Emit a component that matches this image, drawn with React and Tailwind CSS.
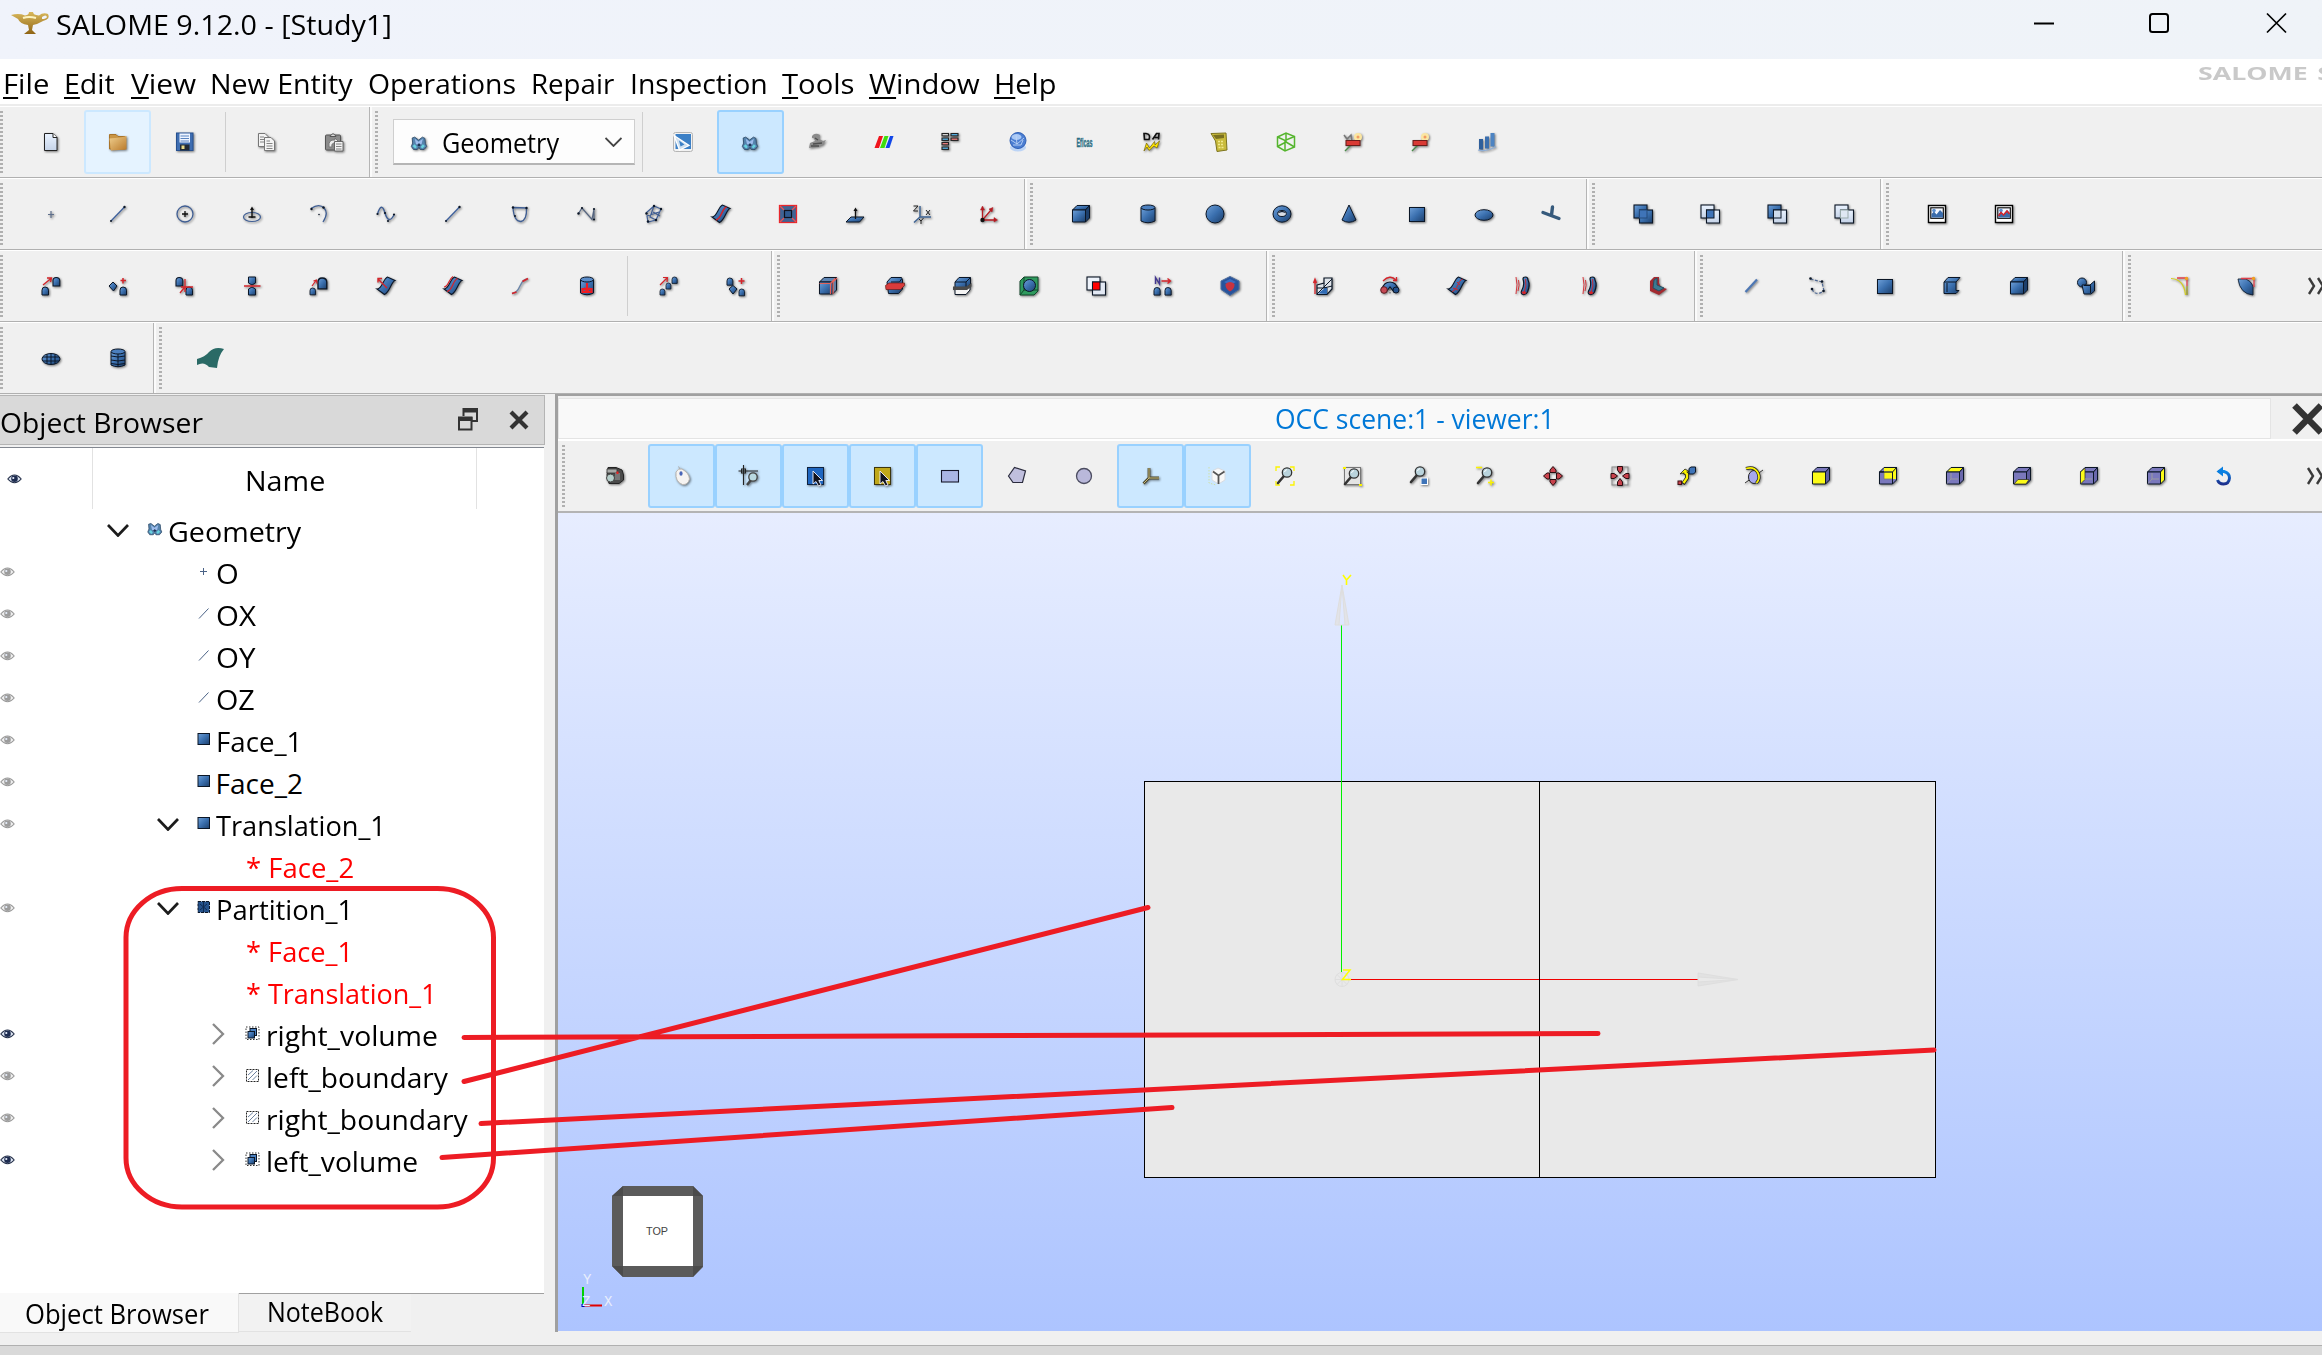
import React, { useLayoutEffect, useRef } from "react";

/* Text squeezed or stretched to a given advance width */
function T({ w, children, className = "" }) {
  const ref = useRef(null);
  useLayoutEffect(() => {
    const el = ref.current;
    el.style.transform = `scaleX(${w / el.offsetWidth})`;
  }, [w]);
  return (
    <span className="inline-block shrink-0 whitespace-nowrap" style={{ width: w }}>
      <span ref={ref} className={"inline-block origin-left whitespace-pre " + className}>{children}</span>
    </span>
  );
}

const B = "url(#blue)";
const K = "#0b1626";
const R = "#d4242a";

function Defs() {
  return (
    <svg className="absolute h-0 w-0" aria-hidden="true">
      <defs>
        <linearGradient id="blue" x1="0" y1="0" x2="1" y2="1">
          <stop offset="0" stopColor="#6fa0d8" /><stop offset="0.5" stopColor="#3a6fae" /><stop offset="1" stopColor="#1d3f6b" />
        </linearGradient>
        <linearGradient id="pale" x1="0" y1="0" x2="0" y2="1">
          <stop offset="0" stopColor="#eaf3ff" /><stop offset="1" stopColor="#c5d3e8" />
        </linearGradient>
        <linearGradient id="gold" x1="0" y1="0" x2="1" y2="1">
          <stop offset="0" stopColor="#f0cf8e" /><stop offset="1" stopColor="#b9792a" />
        </linearGradient>
        <linearGradient id="lamp" x1="0" y1="0" x2="0" y2="1">
          <stop offset="0" stopColor="#d9b85c" /><stop offset="1" stopColor="#8f6414" />
        </linearGradient>
        <linearGradient id="undo" x1="0" y1="0" x2="0" y2="1">
          <stop offset="0" stopColor="#0a86e8" /><stop offset="1" stopColor="#1d2f8c" />
        </linearGradient>
      </defs>
    </svg>
  );
}

const Bell = ({ x, y, s = 1 }) => (
  <path transform={`translate(${x} ${y}) scale(${s})`} d="M0 8V3.2Q0 0 3 0Q6.500 0 6.500 3.200V8Z" fill={B} stroke={K} strokeWidth="1" />
);
const Cube = ({ f = B, t = B, r = "#1d3f6b", children }) => (
  <g strokeLinejoin="round">
    <path d="M1.500 6L6 1.500H18.500L14.500 6Z" fill={t} stroke={K} />
    <path d="M14.500 6L18.500 1.500V14L14.500 18Z" fill={r} stroke={K} />
    <path d="M1.500 6H14.500V18H1.500Z" fill={f} stroke={K} />
    {children}
  </g>
);
const Lens = ({ x = 0, y = 0, children }) => (
  <g>
    {children}
    <g transform={`translate(${x} ${y})`}>
      <path d="M3 17L9 10" stroke="#333" strokeWidth="2.600" strokeLinecap="round" />
      <circle cx="12" cy="6.500" r="4.700" fill="#b9d3dc" stroke="#333" strokeWidth="1.300" />
      <path d="M9.500 6Q10 3.800 12 3.600" stroke="#fff" fill="none" />
    </g>
  </g>
);
const Tri = ({ d }) => <path d={d} fill="#c8424c" stroke="#2a0d10" strokeWidth="1" />;
const Wave = () => <path d="M1 13C6 13.500 7 3 11.500 1L19 4.500C15 6 14 16 8.500 18.500Z" fill={B} stroke={K} strokeWidth="1.100" />;
const Pipe = () => (
  <g>
    <path d="M9 3Q9 1 11.500 1T14 4Q16.500 9 13.500 16Q12 19 9 18.500Q6.500 18 7.500 15Q11 9 9 3Z" fill={B} stroke={K} strokeWidth="1.200" />
    <path d="M11.500 3Q13 10 10 17" stroke={R} fill="none" strokeWidth="0.900" />
    <path d="M7.500 16Q10 14.500 12.500 16.500Q11 19 9 18Z" fill={R} />
    <path d="M2 1Q4 8 2 18M4.500 4Q6 9 4 15" stroke={R} fill="none" strokeWidth="0.900" />
  </g>
);
const Geo = () => (
  <g>
    <path d="M2 3.500L5 2.500L9.500 6L14 2.500L17 4L17.500 10L19 13.500L16 17H11.500L10 14.500L8 17H3.500L1 13.500L2.500 9.500Z" fill="#5583ad" stroke="#22405e" strokeWidth="0.900" />
    <path d="M5 4.500L9.500 8L14.500 4.500L13 11H6.500Z" fill="#9dbcec" />
    <path d="M2.500 13L5 11L7.500 14L5.500 16ZM17 13L14.500 11L12 14L14 16Z" fill="#67d3de" />
    <path d="M8 12L10 9.500L12 12L10 13.500Z" fill="#1c2f4f" />
  </g>
);
const Sheets = ({ a, b, m, ms = K }) => (
  <g>
    <rect x="1" y="1" width="13" height="13" fill={a} stroke={K} strokeWidth="1.100" />
    <rect x="6.500" y="6" width="13" height="13" fill={b} stroke={K} strokeWidth="1.100" />
    <rect x="6.500" y="6" width="7.500" height="8" fill={m} stroke={ms} strokeWidth="1" />
  </g>
);
const Arrow = ({ x, y }) => (
  <path transform={`translate(${x} ${y})`} d="M0 0V13L3 10.500L5.500 15L8 14L5.800 9.500H9.500Z" fill="#10131e" stroke="#f3f3ff" strokeWidth="0.900" />
);
const Dump = ({ c }) => (
  <g>
    <rect x="1.500" y="1.500" width="17" height="17" fill="#fff" stroke="#000" strokeWidth="1.400" />
    <rect x="3.800" y="3.800" width="12.500" height="10.500" fill="#f4f8ff" stroke="#000" strokeWidth="1.100" />
    <path d="M4.500 13.500V10L7 7.500L9.500 10.500L13 6L16 9V13.500Z" fill="#3b6cab" />
    <circle cx="7" cy="6.500" r="1.800" fill="#5b8fd0" />
    {c && <path d="M4.500 12L7 8.500L9.500 11L13 7L15.500 10" stroke={c} strokeWidth="1.500" fill="none" />}
  </g>
);

const ICONS = {
  new: <g><path d="M3.500 1.500H12L16 5.500V18.500H3.500Z" fill="url(#pale)" stroke="#222" /><path d="M12 1.500V5.500H16" fill="#fff" stroke="#222" /></g>,
  open: <g><path d="M1.500 2.500H8L10 4.500H17V17H1.500Z" fill="#c99545" stroke="#a9742a" /><path d="M1.500 6.500L13 5.500L18.500 4V17.500L3 18.500Z" fill="url(#gold)" /></g>,
  save: <g><rect x="1.500" y="1" width="16.500" height="17.500" fill="#3f6eb2" stroke="#26508f" /><rect x="4.500" y="1.500" width="10.500" height="9" fill="#eef4ff" /><path d="M5.500 4H14M5.500 6.500H14M5.500 9H14" stroke="#5a84c0" /><rect x="5" y="12.500" width="9.500" height="6" fill="#222a33" /><rect x="6.500" y="13.500" width="3" height="3.500" fill="#e6d98a" /></g>,
  copy: <g fill="#f4f4f4" stroke="#777"><path d="M1.500 1.500H8L11 4.500V14.500H1.500Z" /><path d="M7.500 5.500H14L17.500 9V18.500H7.500Z" /><path d="M3 5H7M3 7.500H7M3 10H7M9.500 9H13M9.500 11.500H15.500M9.500 14H15.500M9.500 16.500H15.500" strokeWidth="0.900" /></g>,
  paste: <g><rect x="1.500" y="3" width="15" height="15" rx="1" fill="#8b8b8b" stroke="#555" /><path d="M6 4.500Q9 -1 12 4.500Z" fill="#ddd" stroke="#555" /><path d="M5 15Q4 7 11 8V6L15 10L11 13V11Q7 11 8 15Z" fill="#eee" stroke="#777" /><path d="M10.500 9.500H19V19H10.500Z" fill="#f2f2f2" stroke="#666" /><path d="M12 12H17.500M12 14.500H17.500M12 17H17.500" stroke="#777" strokeWidth="0.900" /></g>,
  shaper: <g><rect x="0.500" y="0.500" width="19" height="19" rx="2" fill="#f2f2f2" stroke="#b5b5b5" /><rect x="2.500" y="2" width="15.500" height="15" fill="#3c80c6" /><path d="M1 3.500L16 13.500L6.500 18Z" fill="#cfe0f0" stroke="#fff" strokeWidth="1.300" /><path d="M6 8.500L11.500 12.500L7.500 14.500Z" fill="#3c80c6" /></g>,
  geo: <g transform="translate(1.500 3) scale(0.850)"><Geo /></g>,
  mesh: <g fill="#8b8b8b"><path d="M5 4Q8 0 13 3L12 7L16 9L19 8L16 13L10 15L2 16L3 11L8 9L7 6L5 6Z" /><path d="M6 12L15 11M8 6L11 8M4 14H12" stroke="#4f4f4f" strokeWidth="1.400" fill="none" /></g>,
  para: <g><path d="M5 4H9L5 16H0.500Z" fill="#f0141c" /><path d="M10.500 4H14.500L10.500 16H6Z" fill="#3ede0c" /><path d="M16 4H19.500L15.500 16H11.500Z" fill="#1046e8" /></g>,
  yacs: <g stroke="#222" strokeWidth="1.100"><rect x="1" y="1.500" width="6.500" height="2.400" fill="#ddd" /><rect x="10" y="1.500" width="7" height="2.400" fill="#58b4e8" /><rect x="1" y="6" width="6.500" height="2.400" fill="#58b4e8" /><rect x="10" y="6" width="7" height="2.400" fill="#f08080" /><rect x="1" y="10.500" width="6.500" height="2.400" fill="#f08080" /><rect x="1" y="15" width="6.500" height="2.400" fill="#58b4e8" /></g>,
  globe: <g><ellipse cx="10" cy="15.500" rx="8" ry="4" fill="#bcd4f6" /><circle cx="10" cy="8.500" r="8" fill="#4b7ed2" stroke="#2f5fb5" /><ellipse cx="8.500" cy="5" rx="5" ry="3" fill="#a9c8f5" /><path d="M3 8L9 12L16 6M5 13L13 13L15 8M8 3L9 12" stroke="#bcd4f6" fill="none" strokeWidth="0.900" /></g>,
  eficas: <text x="1.500" y="15" fontSize="13" fontWeight="700" textLength="16" lengthAdjust="spacingAndGlyphs" fill="#2c6f84" stroke="#2c6f84" strokeWidth="0.400" fontFamily="Liberation Sans, sans-serif">Eficas</text>,
  da: <g><path d="M2 1.500H4Q9 2 7 7.500H2.500ZM10.500 7.500L14.500 1.500H17L16.500 7.500M12 5.500H17" fill="none" stroke="#111" strokeWidth="1.600" /><path d="M2 19L4.500 11L7.500 16L12.500 9.500L13 13L17.500 9L15 16L12 14L7 18.500L5 15Z" fill="#ffe600" stroke="#806f10" strokeWidth="0.800" /></g>,
  calc: <g><path d="M2 1.500L17 1L18 18L8 19.500L6.500 9Z" fill="#c9bb3c" stroke="#7d741e" /><path d="M4 3L15 2.500L15 6L7 7Z" fill="#7a7020" /><path d="M9 9.500H15M9 12.500H15M9.500 15.500H15" stroke="#f2e98d" strokeWidth="1.500" strokeDasharray="2 1" /></g>,
  gcube: <g fill="none" stroke="#55b52e" strokeWidth="1.500"><path d="M1.500 5L10 1L18.500 4.500V15L9 19L1.500 14.500Z" /><path d="M1.500 5L9 8.500L18.500 4.500M9 8.500V19M10 1V10L1.500 14.500M10 10L18.500 15" /></g>,
  hexA: <g><path d="M1 3L4 7L8 3L9 9" stroke="#777" fill="none" strokeWidth="1.500" /><circle cx="15" cy="5" r="4" fill="#fbe6a2" /><circle cx="15" cy="5" r="1.500" fill="#f29b64" /><path d="M9 12L2 19" stroke="#4a8a4a" strokeWidth="1.500" /><rect x="3" y="8.500" width="14" height="5" fill="#d93a35" stroke="#6a1d1b" /></g>,
  hexB: <g><circle cx="15" cy="5" r="4" fill="#fbe6a2" /><circle cx="15" cy="5" r="1.500" fill="#f29b64" /><path d="M9 12L2 19" stroke="#4a8a4a" strokeWidth="1.500" /><rect x="3" y="8.500" width="14" height="5" fill="#d93a35" stroke="#6a1d1b" /></g>,
  bars: <g fill="#2f5f9b"><rect x="2" y="7" width="4" height="10.500" /><rect x="8" y="4.500" width="4" height="12" fill="#3b6fae" /><rect x="13.500" y="1" width="4" height="13.500" fill="#4d84c3" /><path d="M1 18Q10 20 19 14.500" stroke="#8eaed6" fill="none" strokeWidth="1.200" /></g>,

  point: <path d="M10 7V14M7 10.500H13" stroke="#5e6f8c" strokeWidth="1.200" />,
  line: <g><path d="M3 17L16.500 3" stroke="#3c5f9c" strokeWidth="1.300" /><circle cx="16.500" cy="3" r="1.200" fill={K} /><circle cx="3" cy="17" r="1" fill={K} /></g>,
  circle: <g fill="none"><circle cx="10" cy="10" r="8" stroke="#3f5e94" strokeWidth="1.300" /><path d="M10 7V13M7 10H13" stroke="#111" strokeWidth="1.300" /></g>,
  ellipse: <g fill="none"><ellipse cx="10" cy="13" rx="8.500" ry="4.500" stroke="#3f5e94" strokeWidth="1.200" /><path d="M10 4V14M6.500 13H13.500" stroke="#111" strokeWidth="1.400" /><path d="M8 6L10 2.500L12 6Z" fill="#111" /></g>,
  arc: <g fill="none"><path d="M2 4.500Q10 -1 15 4T14 18" stroke="#3f5e94" strokeWidth="1.300" /><circle cx="2.500" cy="5" r="1.200" fill={K} /><circle cx="14.500" cy="3.500" r="1.200" fill={K} /><circle cx="10" cy="10.500" r="0.800" fill={K} /></g>,
  curve: <g fill="none"><path d="M1.500 10Q5.500 -3 9 9T18 11" stroke="#3f5e94" strokeWidth="1.400" /><circle cx="1.500" cy="10" r="1.100" fill={K} /><circle cx="9" cy="9" r="1.100" fill={K} /><circle cx="18" cy="10.500" r="1.100" fill={K} /><circle cx="12" cy="17" r="1.100" fill={K} /></g>,
  sketch: <g fill="none"><path d="M3 3.500L16.500 4Q17 16 11 17.500Q4 18 3 3.500Z" stroke="#3f5e94" strokeWidth="1.300" /><circle cx="3" cy="3.500" r="1.200" fill={K} /><circle cx="16.500" cy="4" r="1.200" fill={K} /><circle cx="5" cy="12" r="1" fill={K} /></g>,
  poly: <g fill="none"><path d="M1.500 9.500L5 4L15 15.500L17 5V16" stroke="#54647f" strokeWidth="1.200" /><circle cx="1.500" cy="9.500" r="1.200" fill={K} /><circle cx="5" cy="4" r="1.100" fill={K} /><circle cx="17" cy="5" r="1.100" fill={K} /><circle cx="17" cy="15.500" r="1.100" fill={K} /></g>,
  sk3: <g fill="none" stroke="#3f5e94" strokeWidth="1.200"><path d="M2 9L10 2L17 5L12 16L4 18L3 12L15 8M10 2L6 13L12 16M9 8L16 12" /><g fill={K} stroke="none"><circle cx="10" cy="2" r="1.200" /><circle cx="17" cy="5" r="1.200" /><circle cx="4" cy="17.500" r="1.200" /><circle cx="12" cy="16" r="1.200" /><circle cx="2.500" cy="9.500" r="1.200" /></g></g>,
  isoline: <g><Wave /><path d="M5 16C11 14.500 10.500 4.500 15.500 3" stroke={R} strokeWidth="1.500" fill="none" /></g>,
  surfface: <g><rect x="1.500" y="1.500" width="17" height="17" fill="#3f6494" stroke="#e8262b" strokeWidth="1.300" /><path d="M2 2L6 6M18 2L14 6M2 18L6 14M18 18L14 14" stroke="#f05050" strokeWidth="1.300" /><rect x="6.500" y="6.500" width="7" height="7" fill="#2f5a90" stroke="#10131e" strokeWidth="1.200" /></g>,
  plane: <g><path d="M1 18L6 13H19L14.500 18Z" fill={B} stroke={K} /><path d="M10.500 15V5" stroke="#111" strokeWidth="1.300" /><path d="M8.500 7L10.500 3.500L12.500 7" fill="#111" /></g>,
  lcs: <g fill="none"><path d="M8 2V13H19M8 13L2 18.500" stroke="#3f6494" strokeWidth="1.500" /><path d="M1.500 2H6L1.500 7H6M14 6L18 11M18 6L14 11M7 15L9 17L11.500 14M9 17V20" stroke="#222" strokeWidth="1" /></g>,
  axes: <g stroke="#b51b22" fill="#b51b22"><path d="M3.500 16V4M3.500 16H16M3.500 16L12 6" strokeWidth="1.300" /><path d="M1.500 6L3.500 2L5.500 6ZM15 13.500L18.500 16L15 18ZM10 5L14 3.500L13 8Z" strokeWidth="0.500" /><circle cx="3.500" cy="16" r="2.200" fill="#111" stroke="none" /></g>,

  box: <Cube />,
  cyl: <g><path d="M3 4V17Q10 20.500 17 17V4Z" fill={B} stroke={K} /><ellipse cx="10" cy="3.500" rx="7" ry="2.500" fill="#4b7fbe" stroke={K} /></g>,
  sphere: <circle cx="10" cy="10" r="9" fill={B} stroke={K} />,
  torus: <g><ellipse cx="10" cy="10" rx="9" ry="8.200" fill={B} stroke={K} /><ellipse cx="10" cy="9.500" rx="4.300" ry="3" fill="#d8dde4" stroke={K} /><path d="M6.500 8.500Q10 6 13.500 8.500" fill="#7a8da8" stroke={K} /></g>,
  cone: <path d="M10 1L17 16Q10 20.500 3 16Z" fill={B} stroke={K} />,
  rect: <rect x="2.500" y="3.500" width="15" height="14" fill={B} stroke={K} />,
  disk: <ellipse cx="10" cy="11" rx="9" ry="5.300" fill={B} stroke={K} />,
  tshape: <path d="M2 8.500L18 14.500M11.500 3L10.500 11" stroke="#365a7c" strokeWidth="3.400" strokeLinecap="round" />,
  fuse: <Sheets a={B} b={B} m="#3f74b8" ms="#254a7a" />,
  common: <Sheets a="url(#pale)" b="url(#pale)" m="#3f74b8" />,
  cut: <Sheets a={B} b="url(#pale)" m="#cfdcec" />,
  section: <Sheets a="url(#pale)" b="url(#pale)" m="#dfe8f3" ms="#9aa" />,
  dump: <Dump />,
  dump2: <Dump c={R} />,

  translate: <g><Bell x="1" y="11" /><Bell x="12" y="1.500" s="1.050" /><path d="M2 9L10 2.500M6 2L10.500 2L9.500 6" stroke={R} fill="none" strokeWidth="1.300" /></g>,
  rotate: <g><path d="M1 10L5 6L9 10L5.500 15Z" fill={B} stroke={K} /><Bell x="12" y="11" /><path d="M15 2V7.500M12.500 4.500H18" stroke={R} strokeWidth="1.500" /></g>,
  loc: <g><Bell x="1" y="1.500" s="1.050" /><Bell x="11" y="11" /><path d="M10 3V16M6 11H18M5 17L9 12" stroke={R} strokeWidth="1.300" /></g>,
  mirror: <g><path d="M6.500 1H13.500V7L10 9L6.500 7Z" fill={B} stroke={K} /><path d="M6.500 19H13.500V13L10 11L6.500 13Z" fill={B} stroke={K} /><path d="M2 10H18.500" stroke={R} strokeWidth="1.500" /></g>,
  scale: <g><Bell x="1" y="12" s="0.850" /><Bell x="9" y="2" s="1.350" /><path d="M3 10L7 4.500M4.500 5L7.500 4L8 7.500" stroke={R} fill="none" strokeWidth="1.200" /></g>,
  offset: <g><Wave /><path d="M11 12L2 3M2 6.500V2.500H6" stroke={R} fill="none" strokeWidth="1.400" /></g>,
  proj: <g><Wave /><path d="M1 11C5.500 11 6 2.500 10 0.500M4 15.500C10 14 9.500 4.500 14.500 2.500" stroke={R} fill="none" strokeWidth="1.200" /></g>,
  projw: <g fill="none"><path d="M2 17.500Q7 17 10 10T17.500 3" stroke="#6a84a8" strokeWidth="1.400" /><path d="M2 17.500L6.500 16M12.500 5.500L18 2.500" stroke={R} strokeWidth="1.800" /></g>,
  extr: <g><path d="M3.500 4V17Q10 20.500 16.500 17V4Z" fill={B} stroke={K} /><ellipse cx="10" cy="3.500" rx="6.500" ry="2.500" fill="#5a8cc9" stroke={K} /><path d="M10 7V14M5.500 12V16H14.500V12M7 12L10 15L13 12" stroke="#f01d22" strokeWidth="2.200" fill="none" /></g>,
  mtrans: <g><Bell x="1" y="13" s="0.750" /><Bell x="7" y="7" s="0.750" /><Bell x="13" y="1" s="0.800" /><path d="M1 9L8 2M4 1.500L8.500 1.500L8 6" stroke={R} fill="none" strokeWidth="1.200" /></g>,
  mrot: <g><Bell x="1" y="2" s="0.900" /><path d="M3 13L7 9.500L11 13L7 18Z" fill={B} stroke={K} /><Bell x="13" y="13" s="0.850" /><path d="M15.500 2V8M12.500 5H18.500" stroke={R} strokeWidth="1.500" /></g>,

  limit: <g><Cube t="#5f86b5" r="#5f7fa5" /><path d="M1.500 7.500H12.500V18M12.500 7.500L17 2.500M15 18V6L19 2" stroke="#e2635c" fill="none" strokeWidth="1.200" /></g>,
  shapesec: <g><path d="M2 6L6 1.500H16.500L17.500 4V13L13.500 17.500H3.500Z" fill={B} stroke={K} /><path d="M6 6H14.500L16.500 3" stroke={K} fill="none" /><path d="M0.500 9.500L4 7H19.500V9.500L15.500 13.500H1Z" fill="#d93b3b" stroke="#6a1d1b" strokeWidth="0.700" /></g>,
  half: <g><path d="M3 13.500H14L18 10V14L14 18.500H3Z" fill="#f4f4f4" stroke={K} /><path d="M3 11V6L7 1.500H18.500V8L14 12H3Z" fill={B} stroke={K} /><path d="M3 6H14L18.500 1.500M14 6V12" stroke={K} fill="none" /><path d="M1 10.500H14.500L19.500 7V10.500L15 14H1Z" fill="#4a4a4a" /></g>,
  box3: <g><path d="M1 5L5 1H19V15L15 19H1Z" fill="#2f9a5e" stroke="#12472a" /><path d="M5 1V14L1 19M5 14H19" stroke="#12472a" fill="none" /><circle cx="10.500" cy="9.500" r="6" fill={B} stroke={K} /></g>,
  redsec: <Sheets a="#eef3fb" b="#e3e9f4" m="#ff0000" />,
  norm: <g><path d="M2.500 8V1.500L6.500 8V1.500" stroke="#43378f" strokeWidth="1.400" fill="none" /><path d="M8.500 5H17M14.500 2.500L17.500 5L14.500 7.500" stroke={R} strokeWidth="1.400" fill="none" /><Bell x="1" y="11.500" s="0.950" /><Bell x="12" y="11.500" s="0.950" /></g>,
  shield: <g><path d="M10 0.500L19 5V13.500L10 19.500L1 13.500V5Z" fill="#27549c" stroke="#4f6d9c" /><path d="M10 3L16 6L10 9L4 6Z" fill="#3b6cc0" /><path d="M5.500 8Q10 4 14.500 8Q15 13 10 15.500Q5 13 5.500 8Z" fill="#c73340" /></g>,
  ext: <g><path d="M2 18V5M0.500 7L2 3L3.500 7" stroke={R} fill="none" strokeWidth="1.300" /><path d="M4 9L11 7L11 2H19V13L14 18.500H4Z" fill="#dfe4ea" stroke={K} strokeWidth="1.200" /><path d="M4 18L19 3M4 12H14V18M11 7V12L19 10" stroke={K} fill="none" /><path d="M5 17.500L12 12H14V18Z" fill="#2f6bb5" /></g>,
  revol: <g><path d="M3 5Q10 -2 16 4M16.500 1V4.500H13" stroke={R} fill="none" strokeWidth="1.300" /><path d="M2 13Q4 6 10 6T18 13L14 16L10 11L6 16Z" fill={B} stroke={K} strokeWidth="1.200" /><circle cx="4" cy="14" r="3.300" fill="#c64a55" stroke="#5e1c22" /><circle cx="16" cy="14" r="3" fill="#24508a" stroke={K} /><path d="M10 13V19" stroke="#555" strokeDasharray="1.500 1.500" /></g>,
  filling: <g><Wave /><path d="M10 6L13 9M5 15.500C11 14 10.500 5 15.500 3M6 12L11 14" stroke={R} fill="none" strokeWidth="1" /></g>,
  pipe: <Pipe />,
  thick: <g><path d="M2 5L6 1L11 1V7L13 11L19 13L11 19L2 15Z" fill="#a32a30" /><path d="M6 4L9 2V9L16 12L11 15L5 12Z" fill="#3c7a92" stroke="#274f61" /></g>,
  edge: <path d="M4.500 16L16 3.500" stroke="#4d77b4" strokeWidth="2.200" />,
  wire: <g fill="none" stroke="#4c6692" strokeWidth="1.200"><path d="M2.500 3L14 6L16 15M4 13Q7 20 14 16" strokeDasharray="3 1.500" /><g fill={K} stroke="none"><circle cx="2.500" cy="2.500" r="1.300" /><circle cx="14" cy="5.500" r="1.300" /><circle cx="4" cy="13" r="1.300" /><circle cx="15.500" cy="15" r="1.300" /></g></g>,
  shell: <g><path d="M2 6L6 1.500H18L14 6V14.500H17L14 17.500H2Z" fill={B} stroke={K} /><path d="M2 6H14M5 7V16" stroke={K} fill="none" /></g>,
  compound: <g><circle cx="6" cy="6.500" r="4.500" fill={B} stroke={K} /><path d="M6 9H14L18.500 5V15L15 18H8Z" fill={B} stroke={K} /><path d="M8 9.500H14.500V17" stroke={K} fill="none" /></g>,
  fillet1: <g fill="none"><path d="M2 2.500Q15 3 16.500 19" stroke="#d5cf1e" strokeWidth="1.200" /><path d="M8 2H18V10" stroke="#e2404a" strokeWidth="1.300" /><path d="M18 10V19" stroke="#9a9a20" strokeWidth="1.300" /><circle cx="17.500" cy="2.500" r="1.700" fill="#f0a020" /></g>,
  fillet2: <g><path d="M2 3H10Q15 5 17 10V19Q4 18 2 3Z" fill={B} stroke={K} strokeWidth="0.800" /><path d="M5 2.500H18V11" stroke="#e2404a" strokeWidth="1.300" fill="none" /><circle cx="17.500" cy="2.500" r="1.700" fill="#f0a020" /></g>,
  smooth: <g><ellipse cx="10" cy="11" rx="9" ry="5.500" fill={B} stroke={K} /><path d="M2 9H18M2 13H18M6 6V16M10 5.500V16.500M14 6V16" stroke={K} fill="none" /></g>,
  mcyl: <g><path d="M3 4V17Q10 20.500 17 17V4Z" fill={B} stroke={K} /><ellipse cx="10" cy="3.500" rx="7" ry="2.500" fill="#4b7fbe" stroke={K} /><path d="M3 8Q10 10 17 8M3 12Q10 14 17 12M3 15.500Q10 17.500 17 15.500M10 6V19" stroke={K} fill="none" /></g>,

  camera: <g><path d="M3 1.500H11L17 4L18.500 9V14L14 17.500H4L2 9Z" fill="#4a4a4a" stroke="#222" /><path d="M2 3H12V7H2Z" fill="#a8aaa8" stroke="#333" strokeWidth="0.800" /><circle cx="5.500" cy="12" r="4" fill="#b7cfcb" stroke="#444" /><path d="M10 7H15V14H10Z" fill="#777" /><rect x="11.500" y="5.500" width="2" height="2.500" fill="#e22" /></g>,
  mouse: <g><path d="M4 6Q6 2 10 3Q17 7 17.500 13Q16 19 10.500 18.500Q3 16 4 6Z" fill="#f6f4f2" stroke="#b9b5b1" /><ellipse cx="9" cy="7.500" rx="1.600" ry="2.200" fill="#4a66b8" /><path d="M8 3L6.500 0.500" stroke="#aaa" /></g>,
  zstyle: <g><path d="M4.500 -1V19M-0.500 5H19" stroke="#222" strokeWidth="1.100" /><path d="M8 19L12 14" stroke="#444" strokeWidth="2.500" /><circle cx="14" cy="11" r="4.200" fill="#b9d8e0" stroke="#444" strokeWidth="1.300" /><rect x="2.500" y="3" width="4" height="4" fill="none" stroke="#222" /></g>,
  presel: <g><rect x="1.500" y="1.500" width="16" height="17" fill="#1f66c0" stroke="#10233f" /><Arrow x="7" y="5" /></g>,
  sel: <g><rect x="1.500" y="1.500" width="16" height="17" fill="#c0a81a" stroke="#3d360c" /><Arrow x="7" y="5" /></g>,
  srect: <rect x="1.500" y="4.500" width="17" height="11.500" fill="#aab6e4" stroke="#16182a" strokeWidth="1.100" />,
  spoly: <path d="M1.500 10L7.500 1.500L18.500 5L15.500 16.500H6Z" fill="#c0bfde" stroke="#2a2b3d" strokeWidth="1.200" />,
  scirc: <circle cx="10" cy="10" r="7.500" fill="#b9b8da" stroke="#4b4c60" strokeWidth="1.300" />,
  trihedron: <g><path d="M8 2V12H18M8 12L2.500 17.500" stroke="#4c4830" strokeWidth="2.800" fill="none" /><path d="M8 2V12H18M8 12L2.500 17.500" stroke="#c9bd7e" strokeWidth="1" fill="none" /></g>,
  vcube: <g><path d="M4 5L10 2L17 5V14L10.500 18L4 14Z" fill="#f8f8f8" stroke="#d8dce2" /><path d="M5 5.500L10.500 9.500L16.500 5.500M10.500 9.500V18" stroke="#555" strokeWidth="1.800" fill="none" /><path d="M1 1V17L8 19" stroke="#cfe0a8" strokeDasharray="1.500 1.500" fill="none" /></g>,
  fitall: <Lens><path d="M1 5V1H5M15 1H19V5M19 15V19H15M5 19H1V15" stroke="#fbf300" strokeWidth="1.300" fill="none" /></Lens>,
  fitarea: <Lens y={1}><rect x="2.500" y="1.500" width="16" height="17" fill="#e4e4e4" stroke="#777" /><path d="M1 2H4M17 19H20" stroke="#fbf300" strokeWidth="2" /></Lens>,
  fitsel: <g><Lens x={-1} y={-1} /><rect x="12" y="12" width="6.500" height="6.500" fill="#3f74b8" stroke="#fff" /></g>,
  zoom: <g><Lens x={-1} /><path d="M0 1.500H6M12 16.500H18M15 13.500V19.500" stroke="#fbf300" strokeWidth="1.500" /></g>,
  pan: <g><Tri d="M7 6.500V4L10 0.500L13 4V6.500Z" /><Tri d="M7 13.500V16L10 19.500L13 16V13.500Z" /><Tri d="M6.500 7H4L0.500 10L4 13H6.500Z" /><Tri d="M13.500 7H16L19.500 10L16 13H13.500Z" /></g>,
  gpan: <g><rect x="2" y="1" width="16" height="18" fill="none" stroke="#888" /><Tri d="M7.500 0.500H12.500V4L10 7.500L7.500 4Z" /><Tri d="M7.500 19.500H12.500V16L10 12.500L7.500 16Z" /><Tri d="M1 7.500V12.500H4L7.500 10L4 7.500Z" /><Tri d="M19 7.500V12.500H16L12.500 10L16 7.500Z" /></g>,
  rotpt: <g><path d="M7 6L10 8V12L6 18" stroke="#222" strokeWidth="4" fill="none" /><path d="M3 8L8 3L12 5.500Z" fill="#fbf300" stroke="#222" strokeWidth="0.800" /><path d="M7.500 6L10 8V12L6.500 17" stroke="#fbf300" strokeWidth="2.300" fill="none" /><path d="M12 2.500L14 1H18.500V6L16.500 8H12Z" fill="#3f74b8" stroke={K} /><rect x="1" y="15" width="3.500" height="3.500" fill="#c8424c" stroke="#401015" /></g>,
  rot: <g><path d="M1 17L19 4" stroke="#333" /><ellipse cx="10" cy="11" rx="5.500" ry="6.500" fill="#a6a8ee" stroke="#222" /><path d="M2 2.500Q10 0 13.500 6T12.500 17" stroke="#222" strokeWidth="3.200" fill="none" /><path d="M2 2.500Q10 0 13.500 6T12.500 17" stroke="#fbf300" strokeWidth="1.700" fill="none" /></g>,
  front: <Cube f="#fcfb18" t="#7a78bc" r="#5f5da0" />,
  back: <Cube f="#7a78bc" t="#7a78bc" r="#7a78bc"><path d="M6 2H18V13H14.500V6H6Z" fill="#fcfb18" /><rect x="6" y="6" width="8.500" height="7" fill="#fcfb18" stroke="#777" strokeWidth="0.800" /><path d="M1.500 6H14.500L18.500 1.500M14.500 6V18" stroke={K} fill="none" /></Cube>,
  top: <Cube f="#7a78bc" t="#fcfb18" r="#6a68ac"><path d="M6 7V13H13M6 13L2 17.500" stroke="#9a9aa0" fill="none" /></Cube>,
  bottom: <Cube f="#7a78bc" t="#7a78bc" r="#5f5da0"><path d="M2 18L6 13.500H17L14 18Z" fill="#fcfb18" stroke="#333" strokeWidth="0.800" /></Cube>,
  left: <Cube f="#7a78bc" t="#7a78bc" r="#6a68ac"><path d="M1.500 6L6 2V13.500L1.500 18Z" fill="#fcfb18" stroke="#333" strokeWidth="0.800" /><path d="M6 13H13" stroke="#9a9aa0" /></Cube>,
  right: <Cube f="#7a78bc" t="#7a78bc" r="#fcfb18"><path d="M6 7V13H13M6 13L2 17.500" stroke="#9a9aa0" fill="none" /></Cube>,
  undo: <g><path d="M5 5.500H11Q16.500 7 16.500 12Q16 18 10.500 18Q6 18 4.500 14" stroke="url(#undo)" strokeWidth="3" fill="none" /><path d="M3.500 5.500L10 0.500V10.500Z" fill="#0a7fe0" /></g>,
  surf: <path d="M-3 11Q5 9 9 4Q15 -2 24 1Q18 8 17 20L9 19Q4 13 -3 17Z" fill="#2a6a66" />,
};
ICONS.line2 = ICONS.line;
ICONS.pipe2 = ICONS.pipe;

function Ico({ n, flat }) {
  return (
    <svg width="20" height="20" viewBox="0 0 20 20" fill="none" className={"shrink-0 overflow-visible " + (flat ? "" : "drop-shadow-[1px_1px_1px_rgba(0,0,0,0.5)]")}>
      {ICONS[n]}
    </svg>
  );
}

const FLAT = ["shaper", "para", "eficas", "srect", "spoly", "scirc", "undo", "globe", "vcube", "fitall", "calc", "gcube", "surf", "tshape", "surfface"];
function Btn({ n, on, hover }) {
  return (
    <div className={"box-border flex h-16 w-[67.03px] shrink-0 items-center justify-center" + (on ? " rounded-[3px] border-2 border-[#99d1ff] bg-[#cce8ff]" : hover ? " rounded-[3px] border-2 border-[#cce8ff] bg-[#e5f3ff]" : "")}>
      <Ico n={n} flat={FLAT.includes(n)} />
    </div>
  );
}
const Btns = ({ list }) => list.split(" ").map((n) => <Btn key={n} n={n.replace("@", "")} on={n.startsWith("@")} />);

const DOTS = "h-[62px] w-[3px] bg-[repeating-linear-gradient(to_bottom,#b0b0b0_0px,#b0b0b0_2px,transparent_2px,transparent_4px)]";
function Group({ first, last, children }) {
  return (
    <div className={"flex h-full items-center " + (last ? "" : "border-r border-[#b5b5b5] pr-[2px] shadow-[2px_0_0_0_#fbfbfb]")}>
      <div className={"flex shrink-0 " + (first ? "w-[17px]" : "w-[22.7px] pl-[5px]")}>
        <div className={DOTS} />
      </div>
      {children}
    </div>
  );
}
const Sep = () => <div className="flex w-[15px] shrink-0 justify-center"><div className="h-[60px] w-px bg-[#cfcfcf]" /></div>;
const Row = ({ children }) => (
  <div className="box-border flex h-[72px] shrink-0 border-t border-b border-t-white border-b-[#b0b0b0]">{children}</div>
);
const More = ({ className = "" }) => (
  <svg width="20" height="18" viewBox="0 0 20 18" className={"shrink-0 " + className} fill="none" stroke="#3a3a3a" strokeWidth="2.400">
    <path d="M2 1L7 9L2 17M11 1L16 9L11 17" />
  </svg>
);

const MENU = [
  ["F", "ile", 46, 61], ["E", "dit", 51, 67], ["V", "iew", 65, 79], ["", "New Entity", 143, 158], ["", "Operations", 148, 163],
  ["", "Repair", 83, 99], ["", "Inspection", 138, 152], ["T", "ools", 73, 87], ["W", "indow", 111, 125], ["H", "elp", 63, 80],
];

const TREE = [
  [0, "Geometry", "down", "geo", "", 133],
  [1, "O", "", "pt", "off", 23],
  [1, "OX", "", "ln", "off", 40],
  [1, "OY", "", "ln", "off", 39],
  [1, "OZ", "", "ln", "off", 39],
  [1, "Face_1", "", "face", "off", 86],
  [1, "Face_2", "", "face", "off", 87],
  [1, "Translation_1", "down", "face", "off", 170],
  [2, "* Face_2", "", "", "", 108],
  [1, "Partition_1", "down", "part", "off", 137],
  [2, "* Face_1", "", "", "", 107],
  [2, "* Translation_1", "", "", "", 191],
  [2, "right_volume", "right", "grp", "on", 172],
  [2, "left_boundary", "right", "egrp", "off", 182],
  [2, "right_boundary", "right", "egrp", "off", 202],
  [2, "left_volume", "right", "grp", "on", 152],
];

function TreeIcon({ k }) {
  const m = {
    geo: <g transform="translate(0 -0.500) scale(0.780)"><Geo /></g>,
    pt: <path d="M7.500 4V11M4 7.500H11" stroke="#4a6286" />,
    ln: <path d="M3 12.500L12.500 2.500" stroke="#4a6286" />,
    face: <rect x="2" y="1.500" width="11.500" height="11" fill={B} stroke={K} />,
    part: <g><rect x="2" y="1.500" width="11.500" height="11" fill="#24518a" stroke={K} strokeDasharray="3 1" /><path d="M4 4L11 10M11 4L4 10M7.500 2V12" stroke="#0f2a50" /></g>,
    grp: <g><rect x="1" y="1" width="13" height="12.500" fill="#fff" stroke="#333" strokeDasharray="1.500 1.500" /><rect x="5" y="2.500" width="6.500" height="7" fill="#4b7fbe" stroke={K} /><rect x="3" y="5.500" width="6.500" height="6.500" fill={B} stroke={K} /></g>,
    egrp: <g><rect x="1.500" y="1.500" width="12" height="12" fill="#fff" stroke="#222" strokeDasharray="2 1" /><path d="M3 7L8 2.500M3 12L12 3M7.500 12L12 7.500" stroke="#5c7494" strokeWidth="0.900" /></g>,
  };
  return <svg width="16" height="15" viewBox="0 0 16 15" fill="none" className="shrink-0">{m[k]}</svg>;
}

const Eye = ({ on }) => (
  <svg width="15" height="10" viewBox="0 0 15 10" className="shrink-0">
    <path d="M0.800 5Q7.500 -3 14.200 5Q7.500 12.500 0.800 5Z" fill={on ? "#dfe7f4" : "#f0f0f0"} stroke={on ? "#26314a" : "#9a9a9a"} strokeWidth="1.100" />
    <circle cx="7.500" cy="4.800" r="3.300" fill={on ? "#1e2c50" : "#9c9c9c"} />
    <circle cx="6.300" cy="4" r="1.100" fill="#e7eefb" />
  </svg>
);

function TreeRow({ row }) {
  const [lvl, text, chev, icon, eye, w] = row;
  const star = text.startsWith("*");
  return (
    <div className="flex h-[41.970px] items-center">
      <div className="flex w-[93px] shrink-0 items-center pb-[2px]">{eye && <Eye on={eye === "on"} />}</div>
      <div className={"flex shrink-0 items-center pb-[1px] " + (lvl === 0 ? "w-[53.500px] pl-[14px]" : lvl === 1 ? "w-[102.500px] pl-[64px]" : star ? "w-[153px]" : "w-[152px] pl-[118px]")}>
        {chev === "down" && <svg width="22" height="13" viewBox="0 0 22 13" fill="none" stroke="#1c1c1c" strokeWidth="2.700"><path d="M1 1L11 11.500L21 1" /></svg>}
        {chev === "right" && <svg width="14" height="22" viewBox="0 0 14 22" fill="none" stroke="#8a8a8a" strokeWidth="2.300"><path d="M2 1L12 11L2 21" /></svg>}
      </div>
      {!star && <div className={"flex shrink-0 pb-[3px] " + (lvl === 0 ? "w-[21.500px]" : lvl === 1 ? "w-[20px]" : "w-[21px]")}><TreeIcon k={icon} /></div>}
      <T w={w} className={star ? "text-[#ff0000]" : ""}>{text}</T>
    </div>
  );
}

function Scene() {
  return (
    <svg width="1764" height="818" viewBox="558 513 1764 818" fill="none" className="block">
      <g shapeRendering="crispEdges">
        <rect x="1144.500" y="781.500" width="791" height="396" fill="#e9e9e9" stroke="#000" />
        <path d="M1539.500 781V1178" stroke="#000" />
        <path d="M1341.500 625V972" stroke="#00f000" />
        <path d="M1351 979.500H1698" stroke="#f00000" />
        <path d="M1539.500 975V985" stroke="#000" />
      </g>
      <g stroke="#dedede">
        <path d="M1335 625H1349L1342 585ZM1339 625L1342 585L1345 625" fill="#e2e3e8" />
        <path d="M1698 973V986L1738 979.500ZM1698 977L1738 979.500L1698 982" fill="#e2e2e2" />
        <circle cx="1342" cy="979.500" r="7" />
        <path d="M1335 979.500H1349M1342 972V987M1337 974.500L1347 984.500M1347 974.500L1337 984.500" />
      </g>
      <path d="M1343 575L1346.500 580V585M1346.500 580L1351 575" stroke="#ffff00" strokeWidth="1.600" />
      <path d="M1343 970H1350L1342.500 979.500H1351" stroke="#ffff00" strokeWidth="1.500" />
      <g>
        <path d="M623 1186H693L703 1196V1267L693 1277H623L612 1266V1196Z" fill="#5b5b5b" />
        <path d="M623 1186L612 1196H623ZM693 1186L703 1196H693ZM703 1266L693 1277V1266ZM612 1266L623 1277V1266Z" fill="#4b4b4b" />
        <rect x="623" y="1196" width="70" height="70" fill="#fff" />
        <text x="646" y="1235" fontSize="11.500" textLength="22" lengthAdjust="spacingAndGlyphs" fill="#444" fontFamily="Liberation Sans, sans-serif">TOP</text>
      </g>
      <path d="M583 1306V1287" stroke="#00d000" strokeWidth="2" />
      <path d="M583 1305.500H602" stroke="#e00000" strokeWidth="2" />
      <rect x="581.500" y="1304" width="3" height="3" fill="#0000b0" />
      <g fill="#e9eefc" fontSize="14" fontFamily="Liberation Mono, monospace">
        <text x="583" y="1284">Y</text>
        <text x="604" y="1306">X</text>
        <text x="582" y="1306">Z</text>
      </g>
    </svg>
  );
}

export default function App() {
  return (
    <div className="relative flex h-[1355px] w-[2322px] flex-col overflow-hidden bg-[#f0f0f0] font-['Open_Sans','Noto_Sans',sans-serif] text-[28px] leading-[40px] text-black">
      <Defs />

      {/* title bar */}
      <div className="flex h-[59px] shrink-0 justify-between bg-linear-to-r from-[#f0f3fb] to-[#eff3f8]">
        <div className="flex items-start pt-[4px] pl-[11px]">
          <svg width="41" height="24" viewBox="0 0 41 24" className="mt-[8px] mr-[4px] shrink-0">
            <path d="M0 3Q8 1 14 3.500Q18 3 18 0H22Q22 3 28 3.500Q32 0 37 2Q40 7 32 9Q27 12 22 13L21 18L25 22H13L18 18L17 13Q9 12 7 7Z" fill="url(#lamp)" />
            <path d="M12 6Q18 4 25 6" stroke="#fdf3c0" strokeWidth="2" fill="none" />
            <path d="M31 5Q35 2 36 5Q35 7 31 7Z" fill="#f0f3fb" />
          </svg>
          <T w={336}>SALOME 9.12.0 - [Study1]</T>
        </div>
        <svg width="256" height="24" viewBox="0 0 256 24" fill="none" stroke="#000" className="mt-[11px] mr-[32px]">
          <path d="M0 12.500H20" strokeWidth="2" />
          <rect x="116" y="3" width="18" height="18" rx="2.500" strokeWidth="2" />
          <path d="M233 2.500L252 21.500M252 2.500L233 21.500" strokeWidth="1.700" />
        </svg>
      </div>

      {/* menu bar */}
      <div className="flex h-[47px] shrink-0 items-start border-b-2 border-[#ececec] bg-white pl-[3px]">
        {MENU.map(([u, rest, w, pitch]) => (
          <div key={rest} className="shrink-0 pt-[4px]" style={{ width: pitch }}>
            <T w={w}><span className="underline decoration-2 underline-offset-[3px]">{u}</span>{rest}</T>
          </div>
        ))}
        <div className="ml-auto flex w-[124px] gap-[9px] overflow-hidden leading-[20px]">
          <T w={110} className="text-[17px] leading-[20px] font-bold text-[#c9c9c9]">SALOME</T>
          <T w={17} className="text-[17px] leading-[20px] font-bold text-[#c9c9c9]">S</T>
        </div>
      </div>

      <Row>
        <Group first>
          <Btn n="new" /><Btn n="open" hover /><Btn n="save" /><Sep /><Btns list="copy paste" />
        </Group>
        <Group last>
          <div className="box-border flex h-[46px] w-[242px] items-center border border-b-2 border-[#cfcfcf] border-b-[#b5b5b5] bg-[#fdfdfd] pl-[15px]">
            <div className="flex w-[33px]"><Ico n="geo" /></div>
            <T w={117}>Geometry</T>
            <svg width="17" height="10" viewBox="0 0 17 10" className="ml-[46px]" fill="none" stroke="#444" strokeWidth="1.800"><path d="M0.500 1L8.500 9L16.500 1" /></svg>
          </div>
          <Sep />
          <Btns list="shaper @geo mesh para yacs globe eficas da calc gcube hexA hexB bars" />
        </Group>
      </Row>
      <Row>
        <Group first><Btns list="point line circle ellipse arc curve line2 sketch poly sk3 isoline surfface plane lcs axes" /></Group>
        <Group><Btns list="box cyl sphere torus cone rect disk tshape" /></Group>
        <Group><Btns list="fuse common cut section" /></Group>
        <Group last><Btns list="dump dump2" /></Group>
      </Row>
      <Row>
        <Group first><Btns list="translate rotate loc mirror scale offset proj projw extr" /><Sep /><Btns list="mtrans mrot" /></Group>
        <Group><Btns list="limit shapesec half box3 redsec norm shield" /></Group>
        <Group><Btns list="ext revol filling pipe pipe2 thick" /></Group>
        <Group><Btns list="edge wire rect shell box compound" /></Group>
        <Group last><Btns list="fillet1 fillet2" /><More className="ml-[28px]" /></Group>
      </Row>
      <Row>
        <Group first><Btns list="smooth mcyl" /></Group>
        <Group last><Btn n="surf" /></Group>
      </Row>

      <div className="flex h-[951px] shrink-0">
        {/* object browser dock */}
        <div className="flex w-[555px] shrink-0 flex-col pt-px">
          <div className="box-border flex h-[50px] w-[545px] items-center border border-l-0 border-[#b4b4b4] bg-[#d9d9d9] pt-[3px]">
            <T w={203}>Object Browser</T>
            <svg width="22" height="24" viewBox="0 0 22 24" className="mb-[6px] ml-[254px]" fill="none" stroke="#333" strokeWidth="2">
              <path d="M6.500 9V2H20V14H15" /><path d="M6 3.500H21" strokeWidth="4" />
              <rect x="2" y="10.500" width="12.500" height="12" fill="#d9d9d9" /><path d="M1 12H15.500" strokeWidth="4" />
            </svg>
            <svg width="20" height="20" viewBox="0 0 20 20" className="mb-[4px] ml-[30px]" fill="none" stroke="#333" strokeWidth="4.200"><path d="M2 2L18 18M18 2L2 18" /></svg>
          </div>
          <div className="mt-[2px] flex h-[847px] w-[544px] flex-col border-t border-b border-t-[#828790] border-b-[#a0a0a0] bg-white">
            <div className="flex h-[61px] shrink-0">
              <div className="box-border flex w-[93px] items-center border-r border-[#e2e2e2] pl-[7px]"><Eye on /></div>
              <div className="box-border flex w-[384px] items-center justify-center border-r border-[#e2e2e2] pt-[2px]"><T w={80}>Name</T></div>
            </div>
            <div className="flex flex-col pt-[1px]">
              {TREE.map((r, i) => <TreeRow key={i} row={r} />)}
            </div>
          </div>
          <div className="-mt-px flex items-start">
            <div className="box-border flex h-[40px] w-[239px] items-center border-r border-b border-[#e2e2e2] bg-[#f9f9f9] pl-[24.500px]"><T w={184}>Object Browser</T></div>
            <div className="mt-px box-border flex h-[38px] w-[172px] items-center border-b border-[#e2e2e2] bg-[#f2f2f2] pb-[4px] pl-[27.500px]"><T w={116}>NoteBook</T></div>
          </div>
        </div>

        {/* 3D viewer */}
        <div className="flex h-[938px] w-[1767px] shrink-0 flex-col border-t-2 border-l-[3px] border-[#a0a0a0]">
          <div className="flex h-[45px] shrink-0 items-start border-b-2 border-white pt-[2px]">
            <div className="box-border flex h-[41px] w-[1715px] items-center justify-center border border-[#e4e4e4] bg-[#f9f9f9] pb-px">
              <T w={280} className="text-[#0078d7]">OCC scene:1 - viewer:1</T>
            </div>
            <svg width="30" height="32" viewBox="0 0 30 32" className="mt-[5px] ml-[21px] shrink-0" fill="none" stroke="#333" strokeWidth="6.500"><path d="M2.500 2.500L29 29.500M29 2.500L2.500 29.500" /></svg>
          </div>
          <div className="box-border flex h-[72px] shrink-0 items-center border-b-2 border-[#b4b4b4]">
            <div className="flex w-[23px] shrink-0 pl-[4px]"><div className={DOTS} /></div>
            <Btns list="camera @mouse @zstyle @presel @sel @srect spoly scirc @trihedron @vcube fitall fitarea fitsel zoom pan gpan rotpt rot front back top bottom left right undo" />
            <More className="ml-[50px]" />
          </div>
          <div className="h-[818px] shrink-0 bg-linear-to-b from-[#e7edff] to-[#adc4ff]">
            <Scene />
          </div>
        </div>
      </div>
      <div className="h-[10px] shrink-0 border-t border-[#b0b0b0] bg-[#d9d9d9]" />

      {/* red marker annotations over both panes */}
      <svg width="2322" height="1355" viewBox="0 0 2322 1355" className="pointer-events-none absolute top-0 left-0" fill="none" stroke="#ed1c24" strokeWidth="5" strokeLinecap="round">
        <rect x="126" y="888.500" width="367.500" height="318.500" rx="56" ry="49" />
        <path d="M464 1037.500L1598 1033.500M464 1081.500L1148 907.500M481 1123.500L1934 1050M442 1157.500L1172 1107.500" />
      </svg>
    </div>
  );
}
